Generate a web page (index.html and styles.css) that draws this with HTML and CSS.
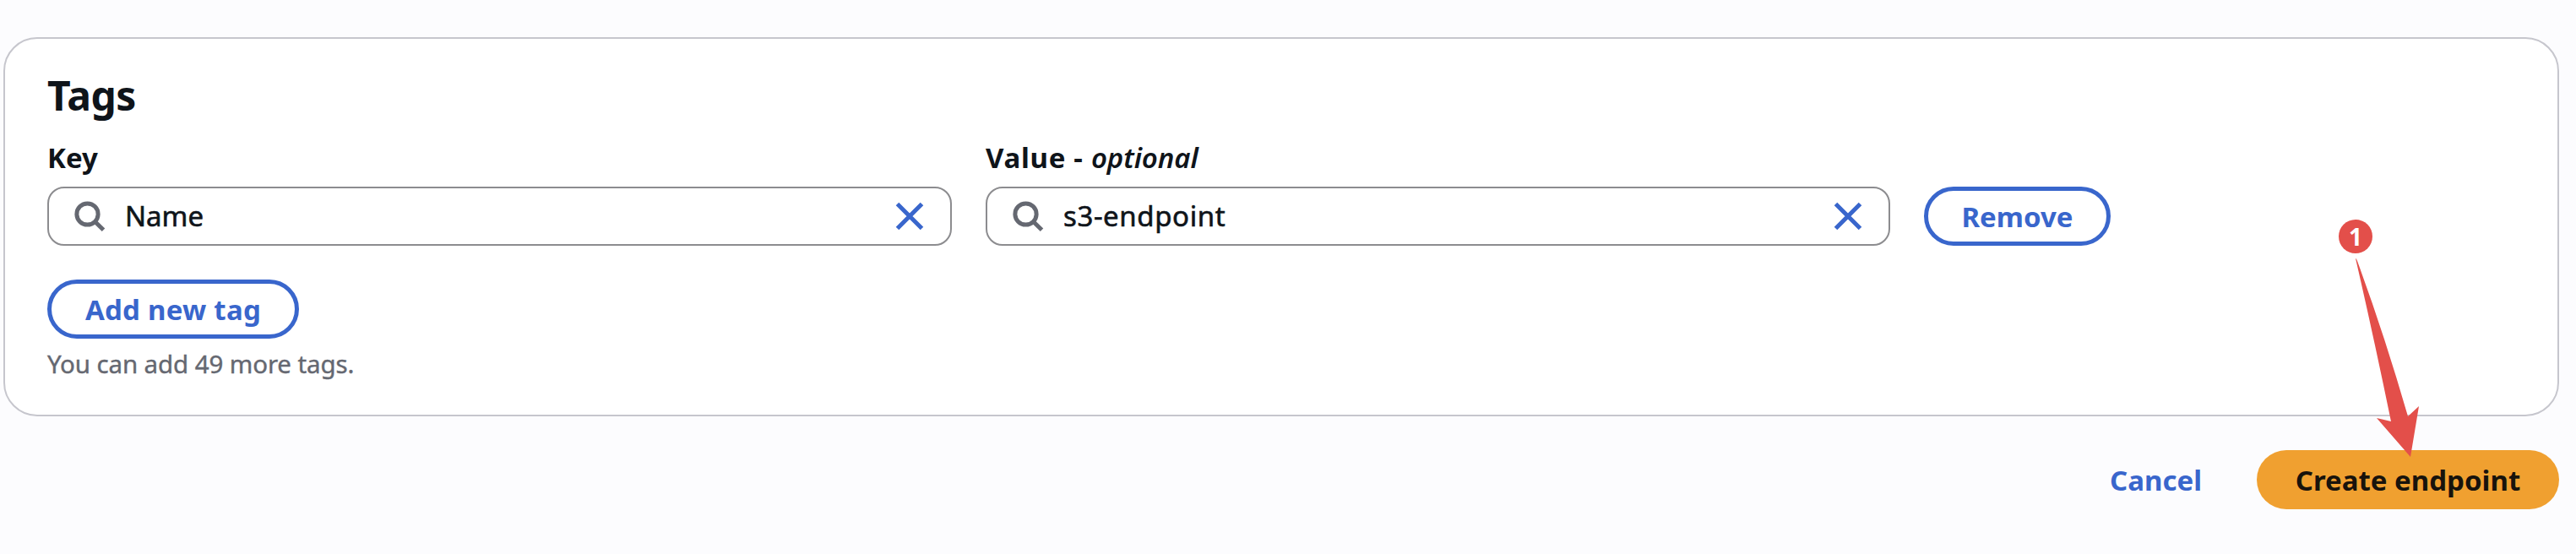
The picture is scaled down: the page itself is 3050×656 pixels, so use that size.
FILE: index.html
```html
<!DOCTYPE html>
<html lang="en">
<head>
<meta charset="utf-8">
<title>Create endpoint</title>
<link rel="stylesheet" href="styles.css">
</head>
<body>
<main class="page">
  <section class="card">
    <h2 class="card-title">Tags</h2>
    <div class="tag-row">
      <div class="field">
        <label class="label">Key</label>
        <div class="input">
          <svg class="search" viewBox="0 0 40 40"><circle cx="15.5" cy="17.5" r="12.6"/><path d="M24.5 26.5 34.5 36.2"/></svg>
          <span class="input-text">Name</span>
          <svg class="clear" viewBox="0 0 36 36"><path d="M3.5 3.5 32.5 32.5M32.5 3.5 3.5 32.5"/></svg>
        </div>
      </div>
      <div class="field">
        <label class="label"><span class="label-main">Value - </span><em class="label-optional">optional</em></label>
        <div class="input">
          <svg class="search" viewBox="0 0 40 40"><circle cx="15.5" cy="17.5" r="12.6"/><path d="M24.5 26.5 34.5 36.2"/></svg>
          <span class="input-text wide">s3-endpoint</span>
          <svg class="clear" viewBox="0 0 36 36"><path d="M3.5 3.5 32.5 32.5M32.5 3.5 3.5 32.5"/></svg>
        </div>
      </div>
      <button class="button remove">Remove</button>
    </div>
    <button class="button add">Add new tag</button>
    <p class="hint">You can add 49 more tags.</p>
  </section>
  <footer class="actions">
    <a class="cancel">Cancel</a>
    <button class="button primary">Create endpoint</button>
  </footer>
  <div class="callout">
    <span class="badge">1</span>
    <svg class="arrow" viewBox="0 0 60 240"><path d="M4 1Q5 1 6 4Q38 91 66 188L79 176 69 236 29 190 46 194Q25 92 4 1Z"/></svg>
  </div>
</main>
</body>
</html>
```
FILE: styles.css
```css
* { box-sizing: border-box; }
body {
  margin: 0;
  background: #fcfcfe;
  color: #0f141a;
  font-family: "Noto Sans", "Open Sans", sans-serif;
  font-size: 33px;
}
.page { position: relative; width: 3050px; height: 656px; padding: 44px 20px 0 4px; overflow: hidden; }
.card {
  height: 449px;
  padding: 34px 50px 0;
  border: 2px solid #c6c6cd;
  border-radius: 40px;
  background: #fff;
}
.card-title { margin: 0; height: 66px; font-size: 48px; line-height: 66px; font-weight: 700; letter-spacing: -0.6px; }
.tag-row { display: flex; align-items: flex-end; gap: 40px; }
.field { width: 1071px; }
.label { display: flex; height: 75px; padding-top: 19px; line-height: 44px; font-weight: 700; white-space: pre; }
.label-main { letter-spacing: 0.7px; }
.label-optional { font-weight: 600; letter-spacing: -0.1px; }
.input {
  display: flex;
  align-items: center;
  height: 70px;
  padding: 0 30px;
  border: 2px solid #8c8c8f;
  border-radius: 20px;
  background: #fff;
}
.search { width: 40px; height: 40px; margin-right: 20px; fill: none; stroke: #656871; stroke-width: 5; }
.clear { width: 36px; height: 36px; margin-left: auto; fill: none; stroke: #3966cc; stroke-width: 5; }
.input-text { line-height: 44px; -webkit-text-stroke: 0.6px currentColor; }
.wide { letter-spacing: 0.6px; }
.button {
  display: flex;
  justify-content: center;
  align-items: center;
  height: 70px;
  padding: 0;
  border: 5px solid #3966cc;
  border-radius: 35px;
  background: #fff;
  color: #3966cc;
  font: inherit;
  font-weight: 700;
  white-space: nowrap;
}
.remove { width: 221px; }
.add { width: 298px; margin-top: 40px; letter-spacing: 0.25px; }
.hint { margin: 8px 0 0; font-size: 29.5px; line-height: 44px; letter-spacing: -0.12px; color: #656871; -webkit-text-stroke: 0.4px currentColor; }
.actions { display: flex; justify-content: flex-end; align-items: center; gap: 65px; margin-top: 40px; }
.cancel { color: #3966cc; font-weight: 700; }
.primary { width: 358px; border: 0; background: #f0a030; color: #18130c; }
.callout { position: absolute; left: 2769px; top: 260px; width: 110px; height: 290px; }
.badge {
  display: flex;
  justify-content: center;
  align-items: center;
  width: 40px;
  height: 40px;
  border-radius: 50%;
  background: #e34f4a;
  color: #fff;
  font-size: 28px;
  line-height: 40px;
  font-weight: 700;
}
.arrow { position: absolute; left: 16px; top: 45px; width: 60px; height: 240px; overflow: visible; fill: #e34f4a; }
```
